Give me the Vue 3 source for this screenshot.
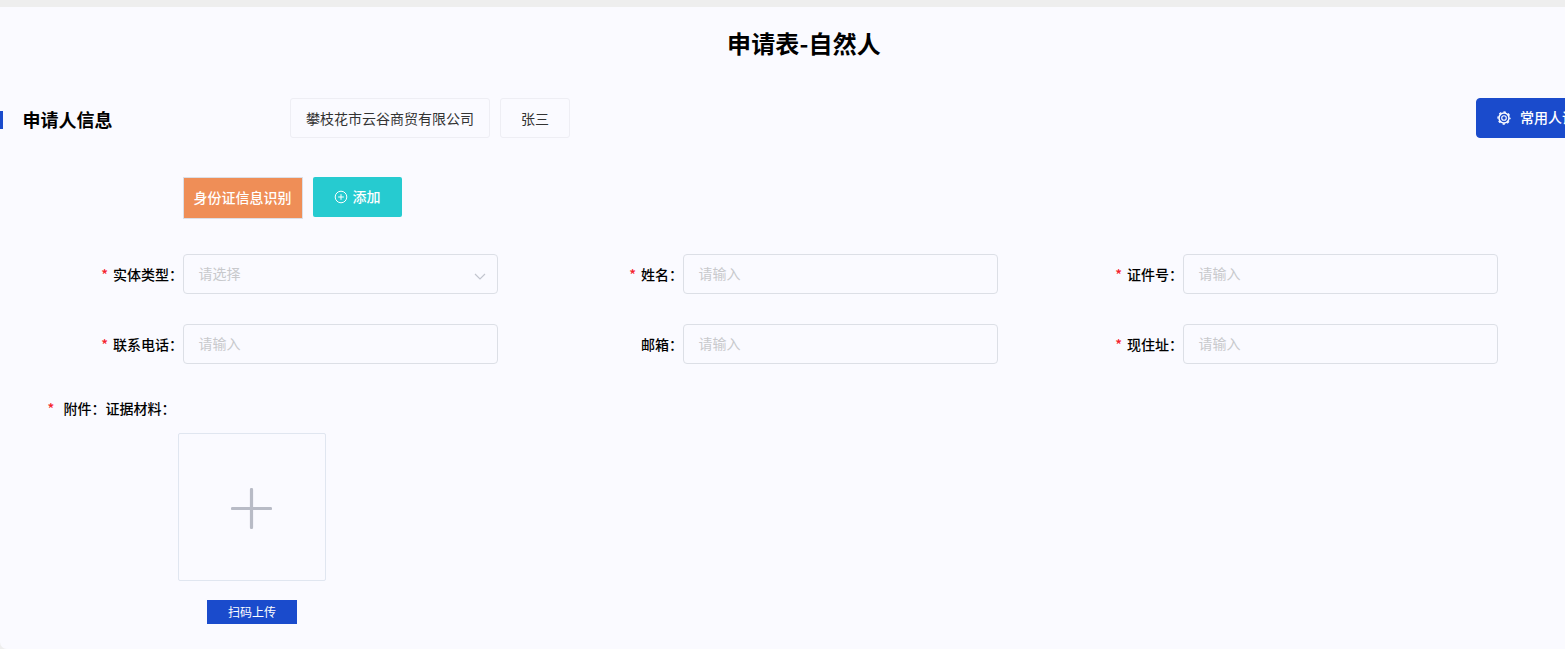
<script setup>
const rows = [
  [
    { label: '实体类型', required: true, placeholder: '请选择', select: true },
    { label: '姓名', required: true, placeholder: '请输入' },
    { label: '证件号', required: true, placeholder: '请输入' },
  ],
  [
    { label: '联系电话', required: true, placeholder: '请输入' },
    { label: '邮箱', required: false, placeholder: '请输入' },
    { label: '现住址', required: true, placeholder: '请输入' },
  ],
]
const fields = rows.flat()
const colon = '\uFF1A'
</script>

<template>
  <div class="page">
    <div class="card">
      <h1 class="title">申请表-自然人</h1>

      <div class="section">
        <div class="section-title">申请人信息</div>
        <div class="tags">
          <div class="tag">攀枝花市云谷商贸有限公司</div>
          <div class="tag tag-person">张三</div>
        </div>
        <button class="btn-common">
          <svg class="gear" width="14" height="14" viewBox="0 0 14 14" fill="none" stroke="#fff">
            <circle cx="7" cy="7" r="5" stroke-width="1.5" />
            <circle cx="7" cy="7" r="6" stroke-width="1.3" stroke-dasharray="2.4 2.31" stroke-dashoffset="1.2" />
            <circle cx="7" cy="7" r="2.3" stroke-width="1.1" />
          </svg>
          <span>常用人证件</span>
        </button>
      </div>

      <div class="toolbar">
        <button class="btn-id"><span>身份证信息识别</span></button>
        <button class="btn-add">
          <svg width="14" height="14" viewBox="0 0 14 14" fill="none" stroke="#fff" stroke-width="1">
            <circle cx="7" cy="7" r="5.8" />
            <path d="M7 4.2v5.6M4.2 7h5.6" />
          </svg>
          <span>添加</span>
        </button>
      </div>

      <div class="form">
        <div v-for="f in fields" :key="f.label" class="field">
          <label class="label"><i v-if="f.required" class="star">*</i>{{ f.label }}{{ colon }}</label>
          <div class="control">
            <span class="placeholder">{{ f.placeholder }}</span>
            <svg v-if="f.select" class="chevron" width="12" height="7" viewBox="0 0 12 7" fill="none" stroke="#c2c5ce" stroke-width="1.2">
              <path d="M1 1l5 5 5-5" />
            </svg>
          </div>
        </div>
      </div>

      <div class="attach-label"><i class="attach-star">*</i><span>附件{{ colon }}证据材料{{ colon }}</span></div>

      <div class="upload-wrap">
        <div class="upload">
          <svg class="plus" width="41" height="41" viewBox="0 0 41 41" fill="none" stroke="#b8bbc6" stroke-width="3.2" stroke-linecap="round">
            <path d="M20.5 1.5v38M1.5 20.5h38" />
          </svg>
        </div>
        <button class="btn-scan"><span>扫码上传</span></button>
      </div>
    </div>
  </div>
</template>

<style>
html, body { margin: 0; background: #eeeeee; overflow: hidden; }
</style>

<style scoped>
.page {
  width: 1565px;
  height: 649px;
  overflow: hidden;
  padding-top: 7px;
  box-sizing: border-box;
  background: #eeeeee;
  font-family: "Noto Sans CJK SC", "Liberation Sans", sans-serif;
}
.card {
  width: 1608px;
  height: 642px;
  background: #fafaff;
  border-radius: 0 0 0 7px;
  box-sizing: border-box;
}
.title {
  margin: 0;
  padding-top: 19px;
  height: 71px;
  box-sizing: border-box;
  font-size: 24px;
  line-height: 34px;
  font-weight: 700;
  color: #000;
  text-align: center;
  letter-spacing: 0.15px;
}
.section {
  display: flex;
  align-items: flex-start;
  margin-top: 20px;
  height: 40px;
}
.section-title {
  width: 290px;
  box-sizing: border-box;
  margin-top: 13px;
  height: 18px;
  border-left: 3px solid #1a4bcc;
  padding-left: 19.5px;
  font-size: 18px;
  line-height: 16px;
  font-weight: 700;
  color: #000;
}
.tags { display: flex; gap: 10px; }
.tag {
  height: 40px;
  width: 200px;
  box-sizing: border-box;
  border: 1px solid #eeeef4;
  border-radius: 3px;
  padding-bottom: 1px;
  display: flex;
  align-items: center;
  justify-content: center;
  font-size: 14px;
  color: #333;
}
.tag-person { width: 70px; }
.btn-common {
  margin-left: 906px;
  width: 131px;
  height: 40px;
  flex: none;
  border: 1px solid #1a4bcc;
  border-radius: 4px;
  background: #1a4bcc;
  color: #fff;
  font: inherit;
  font-size: 14px;
  font-weight: 500;
  display: flex;
  align-items: center;
  gap: 9.5px;
  padding: 0 0 2px 19.5px;
  box-sizing: border-box;
  white-space: nowrap;
}
.gear { flex: none; margin-top: 1px; }
.toolbar {
  display: flex;
  align-items: flex-start;
  gap: 10px;
  margin: 39px 0 0 183px;
  height: 42px;
}
.btn-id {
  width: 120px;
  height: 42px;
  box-sizing: border-box;
  border: 1px solid #dcdfe6;
  background: #ef8e57;
  color: #fff;
  font: inherit;
  font-size: 14px;
  font-weight: 500;
  padding: 0 1px 2px 0;
}
.btn-add {
  width: 89px;
  height: 40px;
  box-sizing: border-box;
  border: 0;
  border-radius: 2px;
  background: #26cbd0;
  color: #fff;
  font: inherit;
  font-size: 14px;
  font-weight: 500;
  padding: 0 1px 2px 0;
  display: flex;
  align-items: center;
  justify-content: center;
  gap: 5px;
}
.btn-add svg { margin-top: 1px; }
.form {
  display: grid;
  grid-template-columns: repeat(3, 500px);
  row-gap: 30px;
  margin-top: 35px;
}
.field {
  display: flex;
  height: 40px;
  align-items: center;
}
.label {
  width: 183px;
  text-align: right;
  font-size: 14px;
  font-weight: 500;
  color: #000;
  flex: none;
  box-sizing: border-box;
}
.star {
  font-style: normal;
  color: #f5222d;
  margin-right: 5px;
  font-size: 14px;
}
.control {
  width: 315px;
  height: 40px;
  box-sizing: border-box;
  border: 1px solid #dcdfe6;
  border-radius: 4px;
  display: flex;
  align-items: center;
  justify-content: space-between;
  padding: 0 11px 2px 14.5px;
}
.placeholder { font-size: 14px; color: #c8c9cc; }
.chevron { margin-top: 6px; }
.attach-label {
  margin: 34px 0 0 47.5px;
  height: 20px;
  padding-bottom: 1px;
  box-sizing: border-box;
  display: flex;
  align-items: center;
  font-size: 14px;
  font-weight: 500;
  color: #000;
  white-space: nowrap;
}
.attach-star {
  font-style: normal;
  color: #f5222d;
  width: 16px;
  font-size: 14px;
}
.upload-wrap {
  width: 148px;
  margin: 15px 0 0 178px;
  display: flex;
  flex-direction: column;
  align-items: center;
}
.upload {
  width: 148px;
  height: 148px;
  box-sizing: border-box;
  border: 1px solid #e0e6f0;
  border-radius: 2px;
  display: flex;
  align-items: center;
  justify-content: center;
}
.plus { margin: 2px 1px 0 0; }
.btn-scan {
  margin-top: 19px;
  width: 90px;
  height: 24px;
  border: 0;
  padding: 0 0 1px;
  background: #1a4bcc;
  color: #fff;
  font: inherit;
  font-size: 12px;
}
</style>
